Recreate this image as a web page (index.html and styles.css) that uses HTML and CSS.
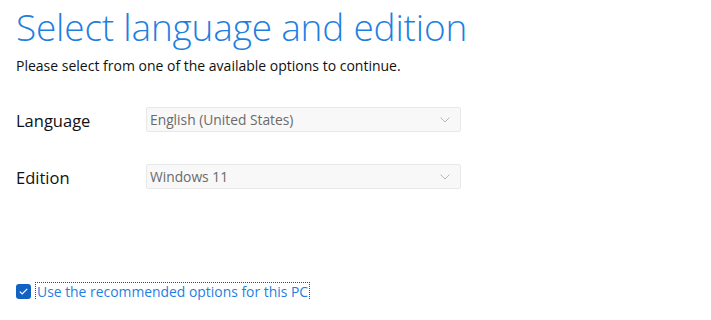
FILE: index.html
```html
<!DOCTYPE html>
<html lang="en">
<head>
    <meta charset="UTF-8">
    <title>Select language and edition</title>
    <link rel="stylesheet" href="styles.css">
</head>
<body>
    <div class="page">
        <h1 class="title">Select language and edition</h1>
        <p class="subtitle">Please select from one of the available options to continue.</p>

        <div class="fields">
            <div class="field">
                <span class="field-label">Language</span>
                <div class="dropdown">
                    <span class="dropdown-value">English (United States)</span>
                    <svg class="chevron" width="10" height="6" viewBox="0 0 10 6"><path d="M0.5 0.5 L5 5 L9.5 0.5" fill="none" stroke="#b8b8b8" stroke-width="1"/></svg>
                </div>
            </div>

            <div class="field">
                <span class="field-label">Edition</span>
                <div class="dropdown">
                    <span class="dropdown-value">Windows 11</span>
                    <svg class="chevron" width="10" height="6" viewBox="0 0 10 6"><path d="M0.5 0.5 L5 5 L9.5 0.5" fill="none" stroke="#b8b8b8" stroke-width="1"/></svg>
                </div>
            </div>
        </div>

        <label class="recommended">
            <span class="checkbox">
                <svg width="9" height="7" viewBox="0 0 9 7"><path d="M0.8 3.6 L3.2 5.9 L8.2 0.9" fill="none" stroke="#fff" stroke-width="1.3"/></svg>
            </span>
            <span class="recommended-text">Use the recommended options for this PC</span>
        </label>
    </div>
</body>
</html>
```

FILE: styles.css
```css
* {
    margin: 0;
    padding: 0;
    box-sizing: border-box;
}

body {
    background: #ffffff;
    font-family: 'Open Sans', 'Noto Sans', sans-serif;
    color: #1a1a1a;
}

.page {
    padding: 0 16px;
}

.title {
    font-weight: 300;
    font-size: 37px;
    line-height: 48px;
    color: #1f7fe0;
    padding-top: 3px;
    letter-spacing: -0.2px;
}

.subtitle {
    font-size: 14px;
    line-height: 18px;
    margin-top: 6px;
    color: #111;
}

.fields {
    display: flex;
    flex-direction: column;
    gap: 32px;
    margin-top: 32px;
}

.field {
    display: flex;
    align-items: center;
}

.field-label {
    width: 130px;
    font-size: 16.5px;
    line-height: 22px;
    padding-top: 2px;
    color: #111;
}

.dropdown {
    width: 315px;
    height: 25px;
    display: flex;
    align-items: center;
    justify-content: space-between;
    padding: 0 10px 0 3px;
    background: #f8f8f8;
    border: 1px solid #e8e8e8;
    border-radius: 2px;
}

.dropdown-value {
    font-size: 13.8px;
    color: #6a6a6a;
}

.recommended {
    display: flex;
    align-items: center;
    gap: 5px;
    margin-top: 94px;
}

.checkbox {
    width: 15px;
    height: 15px;
    border-radius: 3px;
    background: #1262c4;
    display: flex;
    align-items: center;
    justify-content: center;
}

.recommended-text {
    font-size: 13.9px;
    line-height: 17px;
    color: #1f7fe0;
    outline: 1px dotted #444;
    padding: 0 1px;
}
```
